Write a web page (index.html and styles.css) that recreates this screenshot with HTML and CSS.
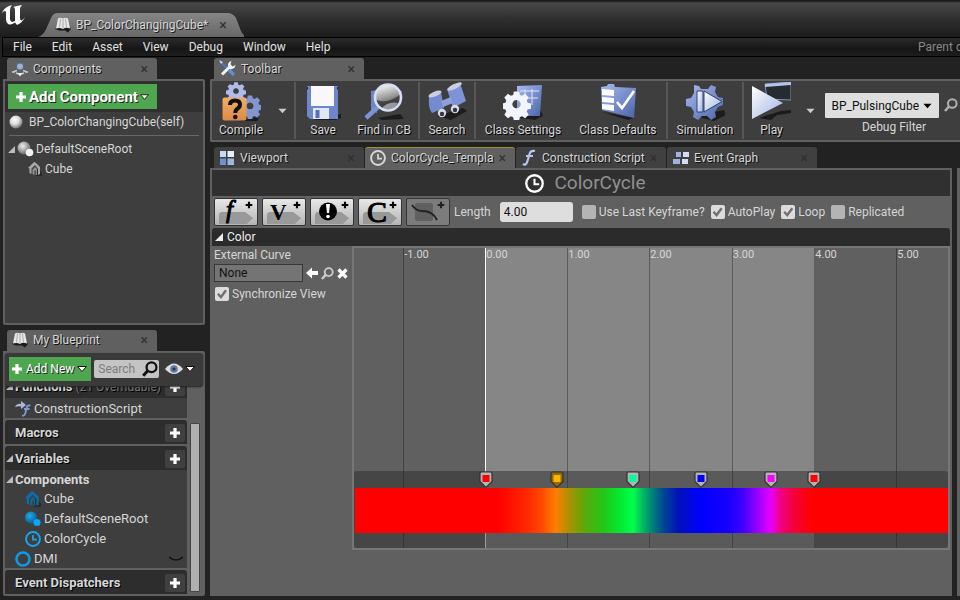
FILE: index.html
```html
<!DOCTYPE html>
<html lang="en">
<head>
<meta charset="utf-8">
<title>BP_ColorChangingCube</title>
<link rel="stylesheet" href="styles.css">
</head>
<body>
<svg class="defs" width="0" height="0" aria-hidden="true">
  <defs>
    <linearGradient id="blue" x1="0" y1="0" x2="1" y2="1"><stop offset="0" stop-color="#a9bcf0"/><stop offset="1" stop-color="#4a63a8"/></linearGradient>
    <linearGradient id="ice" x1="0" y1="0" x2="1" y2="1"><stop offset="0" stop-color="#ffffff"/><stop offset="1" stop-color="#9fb2e2"/></linearGradient>
    <linearGradient id="orange" x1="0" y1="0" x2="0" y2="1"><stop offset="0" stop-color="#f0ad6c"/><stop offset="1" stop-color="#dd8a42"/></linearGradient>
    <linearGradient id="lens" x1=".2" y1="0" x2=".5" y2="1"><stop offset="0" stop-color="#fff"/><stop offset=".6" stop-color="#8a8a8a"/><stop offset="1" stop-color="#444"/></linearGradient>
    <radialGradient id="ball" cx=".4" cy=".35" r=".65"><stop offset="0" stop-color="#fff"/><stop offset=".5" stop-color="#ddd"/><stop offset="1" stop-color="#777"/></radialGradient>
    <radialGradient id="greyball" cx=".4" cy=".35" r=".65"><stop offset="0" stop-color="#eee"/><stop offset="1" stop-color="#6a6a6a"/></radialGradient>
    <radialGradient id="blueball" cx=".4" cy=".35" r=".65"><stop offset="0" stop-color="#22a8ec"/><stop offset="1" stop-color="#04649c"/></radialGradient>
    <symbol id="gear" viewBox="-12 -12 24 24">
      <path fill-rule="evenodd" d="M-2.4-11.5h4.8l.7 3.2 2 .8 2.8-1.800 3.300 3.300-1.800 2.800.8 2 3.200.7v4.800l-3.200.7-.8 2 1.800 2.800-3.300 3.300-2.800-1.800-2 .8-.7 3.200h-4.800l-.7-3.200-2-.8-2.800 1.800-3.300-3.300 1.800-2.800-.8-2-3.200-.7v-4.800l3.200-.7.8-2-1.800-2.800 3.300-3.300 2.800 1.800 2-.8zM0-3.600a3.800 3.800 0 1 0 .01 0z" transform="scale(.9) translate(0 -1.400)"/>
    </symbol>
    <symbol id="book" viewBox="0 0 16 16">
      <path d="M0 12l2-2h12l2 2-3 3.500-3-2H4z" fill="#1b1b1b"/>
      <path d="M3 1.500q2.500-1.500 5 0 2.500-1.500 5 0l2 10q-4-1.500-7 .5-3-1.500-7-.5z" fill="#e8e8e8"/>
      <path d="M8 2v9.500M5.500 1.500l-1 9M10.500 1.500l1 9" stroke="#aaa" fill="none"/>
    </symbol>
    <symbol id="house" viewBox="0 0 14 14">
      <path d="M9 6l5 5v3H8z" fill="#111" opacity=".5"/>
      <path d="M0 6l6-6 2 1 4 4v7l-2 1V7L7 3 3.500 6.500V12L1.500 11V6.500z" fill="currentColor"/>
      <path d="M4.500 7.500L7 5l2 2v6H7.800V8.500H6.500V13l-2-1z" fill="currentColor" opacity=".8"/>
    </symbol>
    <symbol id="clock" viewBox="0 0 18 18"><circle cx="9" cy="9" r="7.800" fill="none" stroke="currentColor" stroke-width="2.200"/><path d="M9 4.500V9.700h4.500" fill="none" stroke="currentColor" stroke-width="2"/></symbol>
    <symbol id="plus" viewBox="0 0 12 12"><path d="M4.400 1h3.200v3.400H11v3.200H7.600V11H4.400V7.600H1V4.400h3.400z" fill="currentColor"/></symbol>
    <symbol id="down" viewBox="0 0 10 6"><path d="M.5.500h9L5 5.500z" fill="currentColor"/></symbol>
    <symbol id="open" viewBox="0 0 8 8"><path d="M8 0v8H0z" fill="currentColor"/></symbol>
    <symbol id="glass" viewBox="0 0 14 14"><circle cx="8.300" cy="5.500" r="4.300" fill="none" stroke="currentColor" stroke-width="2"/><path d="M5 8.500L1 13" stroke="currentColor" stroke-width="2.600"/></symbol>
    <symbol id="pin" viewBox="0 0 14 18"><path d="M2.500 1h9q1.500 0 1.500 1.500v8L7 16.500 1 10.500v-8Q1 1 2.500 1z" fill="var(--rim)" stroke="var(--edge)" stroke-width="1.200"/><path d="M3.500 4h7v7h-7z" fill="currentColor"/></symbol>
    <symbol id="tag" viewBox="0 0 34 12"><path d="M2 0h24l8 6-6 6H0V2z" fill="#999"/></symbol>
  </defs>
</svg>

<header class="titlebar">
  <svg class="logo" viewBox="0 0 24 21" aria-hidden="true"><path d="M0 8Q2 2 10 0 8 2 8 5v9q0 2 2 3l3-1V5q0-3-2-3 3-1 9-2-2 2-2 4v9q0 2 1.500 2.500Q21 15 23 12q-2 5-8 8l-2-2.500Q10 20 7 19.500 4 18 4 14V7Q3 4.500 0 8z" fill="#fff"/></svg>
  <div class="doc-tab">
    <svg width="16" height="16" aria-hidden="true"><use href="#book"/></svg>
    <span>BP_ColorChangingCube*</span>
    <button class="close" aria-label="Close document">×</button>
  </div>
</header>

<nav class="menubar">
  <button>File</button><button>Edit</button><button>Asset</button><button>View</button><button>Debug</button><button>Window</button><button>Help</button>
  <span class="parent">Parent class</span>
</nav>

<main class="workspace">
  <aside class="left">
    <section class="dock">
      <div class="tab active">
        <svg width="16" height="16" viewBox="0 0 16 16" aria-hidden="true"><path d="M4 2l8-1v8H4z" fill="#4f6a8d"/><circle cx="8" cy="5.500" r="3" fill="#9fb0c8"/><path d="M1 11l4-1.500M15 11l-4-1.500M0 11h3M13 11h3M4 12q4 2 8 0" stroke="#c3cad4" stroke-width="1.400" fill="none"/><path d="M5.500 12h5L8 15.500z" fill="#eee"/></svg>
        <h2>Components</h2><button class="close" aria-label="Close Components">×</button>
      </div>
      <div class="panel components">
        <div class="add-bar">
          <button class="green big"><svg width="12" height="12" aria-hidden="true"><use href="#plus"/></svg>Add Component<svg class="outlined" width="9" height="6" aria-hidden="true"><use href="#down"/></svg></button>
        </div>
        <div class="self"><svg width="14" height="14" viewBox="0 0 14 14" aria-hidden="true"><circle cx="7" cy="7" r="6.500" fill="url(#ball)"/></svg>BP_ColorChangingCube(self)</div>
        <ul class="tree">
          <li><svg class="arrow" width="7" height="7" aria-hidden="true"><use href="#open"/></svg><svg width="17" height="16" viewBox="0 0 17 16" aria-hidden="true"><circle cx="7" cy="7" r="6.500" fill="url(#greyball)"/><circle cx="12.500" cy="11.500" r="3.800" fill="#f2f2f2"/></svg>DefaultSceneRoot</li>
          <li class="child grey"><svg width="14" height="14" aria-hidden="true"><use href="#house"/></svg>Cube</li>
        </ul>
      </div>
    </section>

    <section class="dock">
      <div class="tab active">
        <svg width="16" height="16" aria-hidden="true"><use href="#book"/></svg>
        <h2>My Blueprint</h2><button class="close" aria-label="Close My Blueprint">×</button>
      </div>
      <div class="panel blueprint">
        <div class="bp-bar">
          <button class="green"><svg width="12" height="12" aria-hidden="true"><use href="#plus"/></svg>Add New<svg class="outlined" width="10" height="6" aria-hidden="true"><use href="#down"/></svg></button>
          <div class="search"><input type="text" placeholder="Search" aria-label="Search blueprint"><svg width="16" height="16" aria-hidden="true"><use href="#glass"/></svg></div>
          <button class="eye" aria-label="View options"><svg width="18" height="12" viewBox="0 0 18 12" aria-hidden="true"><path d="M0 6q9-11 18 0-9 10-18 0z" fill="#ddd"/><circle cx="9" cy="6" r="3.800" fill="#6079a8"/><circle cx="9" cy="6" r="1.600" fill="#26344f"/></svg><svg class="outlined" width="10" height="6" aria-hidden="true"><use href="#down"/></svg></button>
        </div>
        <div class="bp-body">
          <div class="bp-list">
            <div class="group"><svg class="arrow" width="7" height="7" aria-hidden="true"><use href="#open"/></svg><h3>Functions</h3><span class="dim">(21 Overridable)</span><button class="add" aria-label="Add function"><svg width="12" height="12" aria-hidden="true"><use href="#plus"/></svg></button></div>
            <ul class="rows spaced"><li><svg class="fn" width="16" height="16" viewBox="0 0 16 16" aria-hidden="true"><path d="M0 6q2-4 6-3V0l5 4-5 4V5.500Q3 5 0 6z" fill="#aab8da"/><path d="M7 14.500q2.500 1 3.500-3l1-4.500q.5-3 4-2.500M9 8h5.500" stroke="#7f98d8" stroke-width="1.800" fill="none"/></svg>ConstructionScript</li></ul>
            <div class="group spaced"><h3>Macros</h3><button class="add" aria-label="Add macro"><svg width="12" height="12" aria-hidden="true"><use href="#plus"/></svg></button></div>
            <div class="group"><svg class="arrow" width="7" height="7" aria-hidden="true"><use href="#open"/></svg><h3>Variables</h3><button class="add" aria-label="Add variable"><svg width="12" height="12" aria-hidden="true"><use href="#plus"/></svg></button></div>
            <ul class="rows spaced">
              <li class="sub"><svg class="arrow" width="7" height="7" aria-hidden="true"><use href="#open"/></svg><h4>Components</h4></li>
              <li class="item"><svg class="dark-blue" width="16" height="16" aria-hidden="true"><use href="#house"/></svg>Cube</li>
              <li class="item"><svg width="16" height="16" viewBox="0 0 16 16" aria-hidden="true"><circle cx="6" cy="6.500" r="6" fill="url(#blueball)"/><circle cx="12" cy="11.500" r="3.600" fill="#10a4f4"/></svg>DefaultSceneRoot</li>
              <li class="item"><svg class="sky" width="16" height="16" aria-hidden="true"><use href="#clock"/></svg>ColorCycle</li>
              <li class="var"><svg width="16" height="16" viewBox="0 0 16 16" aria-hidden="true"><circle cx="8" cy="8" r="6.500" fill="none" stroke="#0c9ae8" stroke-width="2.600"/></svg>DMI<button class="lid" aria-label="Toggle DMI visibility"><svg width="14" height="6" viewBox="0 0 14 6" aria-hidden="true"><path d="M0 1q7 6 14 0" fill="none" stroke="#111" stroke-width="1.600"/></svg></button></li>
            </ul>
            <div class="group"><h3>Event Dispatchers</h3><button class="add" aria-label="Add event dispatcher"><svg width="12" height="12" aria-hidden="true"><use href="#plus"/></svg></button></div>
          </div>
          <div class="scroll"><span class="thumb"></span></div>
        </div>
      </div>
    </section>
  </aside>

  <div class="right">
    <section class="toolbar-dock">
      <div class="tab active">
        <svg width="17" height="17" viewBox="0 0 17 17" aria-hidden="true"><path d="M1.500 2L11 11" stroke="#4976c8" stroke-width="2"/><path d="M10 10l5 5" stroke="#5b8de0" stroke-width="3.400"/><path d="M3 14.500L11 6.500" stroke="#f2f2f2" stroke-width="3"/><path d="M12.500 1Q8.500 2 9 6t4 3q3-.5 3.500-4l-3 1.500L11.500 4z" fill="#f2f2f2"/><path d="M0 0l4 2-2 2z" fill="#cfd8ea"/></svg>
        <h2>Toolbar</h2><button class="close" aria-label="Close Toolbar">×</button>
      </div>
      <div class="toolbar">
        <button class="tool"><svg width="40" height="40" viewBox="0 0 40 40" aria-hidden="true"><path d="M22 34l16 2-2 3H20z" fill="#1c1c1c"/><use href="#gear" x="5" y="0" width="20" height="20" fill="#aebcea"/><use href="#gear" x="17" y="13" width="24" height="24" fill="#8495cf"/><rect x="1.500" y="15.500" width="24" height="23" rx="2" fill="url(#orange)"/><path d="M9 23q0-4.500 5-4.500t5 4q0 2.500-2.500 4.200Q14.300 28 14.300 31" fill="none" stroke="#111" stroke-width="4"/><circle cx="14.300" cy="35" r="2.300" fill="#111"/></svg>Compile</button>
        <button class="caret" aria-label="Compile options"><svg width="9" height="6" aria-hidden="true"><use href="#down"/></svg></button>
        <i class="sep"></i>
        <button class="tool"><svg width="40" height="40" viewBox="0 0 40 40" aria-hidden="true"><path d="M10 38l28-6v4l-6 2z" fill="#1c1c1c"/><path d="M4 4h31v33H7l-3-3z" fill="#6f86cc"/><path d="M8 4h23v20H8z" fill="#f8f8fb"/><path d="M10 26h16v11H10z" fill="#e2e6f2"/><path d="M12.500 28h4v8h-4z" fill="#5570bd"/><path d="M4.500 5v2.500M34.500 5v2.500" stroke="#223"/></svg>Save</button>
        <button class="tool"><svg width="40" height="40" viewBox="0 0 40 40" aria-hidden="true"><path d="M14 36l22-4 4 5-22 1z" fill="#1c1c1c"/><path d="M7 9l6-1v23l-6-3zM32 10l6-1-1 10-4 5z" fill="#7185bd"/><path d="M14 25L2 36" stroke="#7c93d6" stroke-width="4.500"/><circle cx="24" cy="15.500" r="13" fill="url(#lens)"/><path d="M11.500 18q14 4 25-6 1 16-13 16.500-9-1-12-10.500z" fill="#2c2c2c" opacity=".7"/><path d="M17 27q7-8 17-6-5 9-17 6z" fill="#999"/><circle cx="24" cy="15.500" r="13" fill="none" stroke="#d6dff6" stroke-width="2.600"/></svg>Find in CB</button>
        <i class="sep"></i>
        <button class="tool"><svg width="40" height="40" viewBox="0 0 40 40" aria-hidden="true"><path d="M10 34l26-8 4 3-16 9z" fill="#1c1c1c"/><path d="M2 14l12-4 3 16-12 5q-4-4-3-17z" fill="#758bce"/><path d="M20 7l13-6 6 18-13 7z" fill="#7d93d6"/><path d="M14 19l10-4 2 6-10 4z" fill="#8da0d8"/><ellipse cx="8" cy="12" rx="7" ry="2.500" transform="rotate(-22 8 12)" fill="#c9cfdf"/><ellipse cx="27.500" cy="4.500" rx="8" ry="2.500" transform="rotate(-26 27.500 4.500)" fill="#c9cfdf"/><circle cx="15" cy="31" r="4.200" fill="#d7dbe6"/><circle cx="15" cy="32" r="2.200" fill="#334"/><circle cx="28" cy="27" r="4.200" fill="#d7dbe6"/><circle cx="28" cy="28" r="2.200" fill="#334"/></svg>Search</button>
        <i class="sep"></i>
        <button class="tool roomy"><svg width="40" height="40" viewBox="0 0 40 40" aria-hidden="true"><path d="M12 35l26-6 2 5-8 4z" fill="#1c1c1c"/><path d="M14 4l25-1-2 31H14z" fill="url(#blue)"/><path d="M17 9h19M16 16h19M22 7v14M29 7v16" stroke="#dfe7fb" fill="none"/><use href="#gear" x="-1" y="9" width="29" height="29" fill="#f2f5fb"/></svg>Class Settings</button>
        <button class="tool roomy"><svg width="40" height="40" viewBox="0 0 40 40" aria-hidden="true"><path d="M4 30l26 8 6-2z" fill="#1c1c1c"/><path d="M3 5l6-1 1-2h6l1 3 21 1-2 30L4 28z" fill="url(#blue)"/><path d="M4 7l12 1v6L4 13zM4 15l12 1v5L4 20zM4 22l12 1v6L4 27z" fill="#fff"/><path d="M19 20l5 6L36 9" fill="none" stroke="#fff" stroke-width="2.600"/></svg>Class Defaults</button>
        <i class="sep"></i>
        <button class="tool roomy"><svg width="40" height="40" viewBox="0 0 40 40" aria-hidden="true"><path d="M10 34l29-6 2 5-12 6z" fill="#1c1c1c"/><path d="M9 3l5 1 2 3h7l3-4 5 2-1 5 3 5 5 1v7l-5 2-3 5 1 5-5 3-4-4h-5l-4 4-5-3 1-5-3-5-5-1v-7l5-1 3-5z" fill="url(#blue)"/><path d="M12 9h6v21h-6z" fill="url(#ice)" stroke="#314270"/><path d="M19 9l18 10.500L19 30z" fill="url(#ice)" stroke="#314270"/></svg>Simulation</button>
        <i class="sep"></i>
        <button class="tool"><svg width="40" height="40" viewBox="0 0 40 40" aria-hidden="true"><path d="M8 36l22-7 10-1v3l-14 2-6 5z" fill="#1a1a1a"/><path d="M14 2l26-2v18l-24-1z" fill="#262a31" stroke="#8296bd"/><path d="M14 2l26-2v3L14 5z" fill="#b4c5ec"/><path d="M1 4l31 17L1 37z" fill="url(#ice)"/></svg>Play</button>
        <button class="caret" aria-label="Play options"><svg width="9" height="6" aria-hidden="true"><use href="#down"/></svg></button>
        <div class="debug">
          <div class="select"><select id="debug"><option>BP_PulsingCube</option></select><svg width="9" height="6" aria-hidden="true"><use href="#down"/></svg></div>
          <label for="debug">Debug Filter</label>
        </div>
        <button class="find" aria-label="Find debug object"><svg width="14" height="14" aria-hidden="true"><use href="#glass"/></svg></button>
      </div>
    </section>

    <div class="lower">
      <section class="editor-dock">
        <div class="tabs">
          <div class="tab"><svg width="16" height="16" viewBox="0 0 16 16" aria-hidden="true"><path d="M1 1h6v6H1z" fill="#c8dbf5"/><path d="M8.500 1H15v6H8.500z" fill="#e8f0fb"/><path d="M1 8.500h6V15H1z" fill="#6c93cf"/><path d="M8.500 8.500H15V15H8.500z" fill="#9bb8e4"/></svg><h2>Viewport</h2><button class="close" aria-label="Close Viewport">×</button></div>
          <div class="tab active current"><svg width="16" height="16" aria-hidden="true"><use href="#clock"/></svg><h2>ColorCycle_Templa</h2><button class="close" aria-label="Close ColorCycle">×</button></div>
          <div class="tab"><svg width="14" height="17" viewBox="0 0 14 17" aria-hidden="true"><path d="M1 15q3 2 4.500-3l2-7Q8.500 1 13 2M4 7h7" stroke="#b4c6f2" stroke-width="2.200" fill="none"/></svg><h2>Construction Script</h2><button class="close" aria-label="Close Construction Script">×</button></div>
          <div class="tab"><svg width="17" height="14" viewBox="0 0 17 14" aria-hidden="true"><path d="M4 1h5v5H4zM1 8h7v5H1z" fill="#9fb4e2"/><path d="M11 1h6v5h-6zM10 8h6v5h-6z" fill="#d3ddf4"/></svg><h2>Event Graph</h2><button class="close" aria-label="Close Event Graph">×</button></div>
        </div>
        <div class="editor">
          <header class="heading"><svg width="19" height="19" aria-hidden="true"><use href="#clock"/></svg><h1>ColorCycle</h1></header>
          <form class="options">
            <button type="button" class="track-btn" aria-label="Add float track"><svg viewBox="0 0 42 26" aria-hidden="true"><use href="#tag" x="4" y="13" width="34" height="12"/><text x="11" y="19" class="glyph italic">f</text><use href="#plus" x="30" y="2" width="8" height="8"/></svg></button>
            <button type="button" class="track-btn" aria-label="Add vector track"><svg viewBox="0 0 42 26" aria-hidden="true"><use href="#tag" x="4" y="13" width="34" height="12"/><text x="7" y="21" class="glyph">V</text><use href="#plus" x="30" y="2" width="8" height="8"/></svg></button>
            <button type="button" class="track-btn" aria-label="Add event track"><svg viewBox="0 0 42 26" aria-hidden="true"><use href="#tag" x="4" y="13" width="34" height="12"/><circle cx="17" cy="12.500" r="9"/><path d="M15 5h4l-1 9h-2z" fill="#fff"/><circle cx="17" cy="17.500" r="1.800" fill="#fff"/><use href="#plus" x="30" y="2" width="8" height="8"/></svg></button>
            <button type="button" class="track-btn" aria-label="Add color track"><svg viewBox="0 0 42 26" aria-hidden="true"><use href="#tag" x="4" y="13" width="34" height="12"/><text x="8" y="23" class="glyph large">C</text><use href="#plus" x="30" y="2" width="8" height="8"/></svg></button>
            <button type="button" class="track-btn off" disabled aria-label="Add curve asset"><svg viewBox="0 0 42 26" aria-hidden="true"><rect x="8" y="4" width="18" height="18" rx="2" fill="#606060"/><path d="M5 6q4 6 10 6 11 0 15 9" fill="none" stroke="#222" stroke-width="2"/><use href="#plus" x="30" y="2" width="8" height="8"/></svg></button>
            <label class="length" for="length">Length</label><input id="length" class="number" type="text" value="4.00">
            <label class="check"><input type="checkbox">Use Last Keyframe?</label>
            <label class="check"><input type="checkbox" checked>AutoPlay</label>
            <label class="check"><input type="checkbox" checked>Loop</label>
            <label class="check"><input type="checkbox">Replicated</label>
          </form>
          <div class="track-title"><svg width="8" height="8" aria-hidden="true"><use href="#open"/></svg><h2>Color</h2></div>
          <div class="track">
            <div class="props">
              <label for="curve">External Curve</label>
              <div class="curve">
                <input id="curve" type="text" value="None">
                <button aria-label="Use selected curve"><svg width="12" height="12" viewBox="0 0 12 12" aria-hidden="true"><path d="M0 6l6-5.500V4h6v4H6v3.500z" fill="#fff"/></svg></button>
                <button class="pale" aria-label="Browse to curve"><svg width="13" height="13" aria-hidden="true"><use href="#glass"/></svg></button>
                <button aria-label="Clear curve"><svg width="11" height="11" viewBox="0 0 11 11" aria-hidden="true"><path d="M1.500 1.500l8 8M9.500 1.500l-8 8" stroke="#fff" stroke-width="3.200"/></svg></button>
              </div>
              <label class="check"><input type="checkbox" checked>Synchronize View</label>
            </div>
            <div class="timeline">
              <div class="range"></div>
              <span class="tick" style="left:8.300%">-1.00</span>
              <span class="tick zero" style="left:22.100%">0.00</span>
              <span class="tick" style="left:35.900%">1.00</span>
              <span class="tick" style="left:49.700%">2.00</span>
              <span class="tick" style="left:63.600%">3.00</span>
              <span class="tick bare" style="left:77.500%">4.00</span>
              <span class="tick" style="left:91.300%">5.00</span>
              <div class="lane"></div>
              <div class="band"></div>
              <svg class="key red" style="left:22.300%" aria-hidden="true"><use href="#pin"/></svg>
              <svg class="key amber" style="left:34.100%" aria-hidden="true"><use href="#pin"/></svg>
              <svg class="key mint" style="left:47%" aria-hidden="true"><use href="#pin"/></svg>
              <svg class="key blue" style="left:58.400%" aria-hidden="true"><use href="#pin"/></svg>
              <svg class="key pink" style="left:70.200%" aria-hidden="true"><use href="#pin"/></svg>
              <svg class="key red" style="left:77.500%" aria-hidden="true"><use href="#pin"/></svg>
            </div>
          </div>
        </div>
      </section>
      <div class="next-panel"></div>
    </div>
  </div>
</main>
</body>
</html>
```
FILE: styles.css
```css
* { box-sizing: border-box; margin: 0; padding: 0; }
body {
  height: 100vh;
  display: flex;
  flex-direction: column;
  overflow: hidden;
  background: #222;
  color: #d6d6d6;
  font: 12px/16px Roboto, sans-serif;
}
svg { flex: none; display: block; }
.defs { position: absolute; }
button, input, select { font: inherit; color: inherit; border: 0; background: none; }
button { display: flex; align-items: center; white-space: nowrap; }
h1, h2, h3, h4 { font: inherit; white-space: nowrap; }
ul { list-style: none; }

.titlebar {
  height: 37px;
  flex: none;
  display: flex;
  align-items: flex-end;
  background: linear-gradient(#1b1b1b 1px, #484848 3px, #303030 18px, #1c1c1c);
}
.logo { width: 24px; height: 21px; margin-left: 2px; align-self: flex-start; margin-top: 5px; }
.doc-tab {
  height: 24px;
  margin-left: 12px;
  padding: 0 17px;
  display: flex;
  align-items: center;
  gap: 5px;
  background: linear-gradient(#858585, #686868);
  clip-path: path("M0 24Q6 22 9 14L13 5Q15 0 20 0H189Q195 0 198 5L203 18Q205 23 210 24Z");
  text-shadow: 1px 1px 0 #222;
}
.doc-tab .close { margin-left: 6px; }
.close { font-size: 14px; color: #303030; text-shadow: none; }
.menubar {
  height: 20px;
  flex: none;
  display: flex;
  align-items: center;
  margin-left: 2px;
  border: 1px solid #000;
  border-right: 0;
  background: linear-gradient(#2b2b2b, #161616 60%, #1d1d1d);
  color: #e0e0e0;
}
.menubar button { padding: 0 10px; }
.parent { margin-left: auto; margin-right: -24px; color: #888; white-space: nowrap; }

.workspace {
  flex: 1;
  min-height: 0;
  display: grid;
  grid-template-columns: 202px minmax(0, 1fr);
  gap: 5px;
  padding: 1px 0 4px 3px;
}
.left { display: flex; flex-direction: column; gap: 5px; min-height: 0; }
.dock { flex: 1; min-height: 0; display: flex; flex-direction: column; }
.tab {
  flex: none;
  width: 150px;
  height: 21px;
  margin-left: 4px;
  padding: 0 9px 0 5px;
  display: flex;
  align-items: center;
  gap: 5px;
  border-radius: 3px 3px 0 0;
  background: #404040;
  text-shadow: 1px 1px 0 #111;
}
.tab .close { margin-left: auto; }
.tab svg { min-width: 16px; }
.tab.active { background: #606060; }
.tab.current { border-top: 1px solid #a09238; }
.panel {
  flex: 1;
  min-height: 0;
  border: 2px solid #606060;
  border-radius: 0 2px 2px 2px;
  background: #3e3e3e;
}
.add-bar { padding: 3px; background: #303030; }
.green { background: #4ea64e; color: #fff; text-shadow: 1px 1px 0 #222; }
.green.big { height: 25px; padding: 0 8px 0 7px; gap: 2px; font-size: 15px; font-weight: 700; }
.outlined { overflow: visible; stroke: #111; stroke-width: 1px; color: #fff; }
.self { height: 24px; margin: 0 4px; padding-bottom: 4px; display: flex; align-items: center; gap: 6px; border-bottom: 1px solid #686868; }
.tree { padding: 3px; }
.tree li { height: 20px; display: flex; align-items: center; gap: 2px; }
.tree .child { padding-left: 20px; gap: 3px; }
.grey svg { color: #a8a8a8; }
.arrow { color: #bbb; }

.blueprint { display: flex; flex-direction: column; background: #606060; }
.bp-bar {
  height: 33px;
  flex: none;
  display: flex;
  align-items: center;
  padding: 0 4px;
  background: #3a3a3a;
  box-shadow: 0 1px 2px #222;
  border-radius: 3px;
  z-index: 1;
}
.bp-bar .green { height: 24px; padding: 0 4px 0 2px; gap: 3px; }
.search { display: flex; align-items: center; width: 65px; height: 18px; margin-left: 3px; padding: 0 1px 0 4px; border-radius: 2px; background: #c4c4c4; color: #111; }
.search input { flex: 1; min-width: 0; }
.search input::placeholder { color: #7d7d7d; }
.eye { gap: 2px; margin-left: 6px; }
.bp-body { flex: 1; min-height: 0; display: flex; font-size: 13px; line-height: 18px; }
.bp-list { flex: 1; min-width: 0; display: flex; flex-direction: column; justify-content: flex-end; overflow: hidden; }
.bp-list > * { flex: none; }
.group { height: 24px; padding: 1px 2px 0 1px; display: flex; align-items: center; gap: 2px; background: #2d2d2d; border-radius: 3px 3px 0 0; text-shadow: 1px 1px 0 #000; }
.group h3, .rows h4 { font-weight: 700; font-size: 13px; }
.group > h3:first-child { padding-left: 9px; }
.dim { color: #777; padding-left: 1px; font-size: 12px; white-space: nowrap; }
.add { margin-left: auto; width: 20px; height: 18px; flex: none; justify-content: center; background: #404040; border-radius: 2px; color: #fff; }
.spaced { margin-bottom: 2px; }
.rows { background: #3e3e3e; }
.rows li { height: 20px; display: flex; align-items: center; gap: 3px; padding: 1px 0 0 10px; }
.rows .sub { height: 18px; padding-left: 1px; gap: 2px; }
.rows .item { padding-left: 20px; }
.dark-blue { color: #0b6ea6; }
.sky { color: #18a4f2; }
.lid { margin: 0 4px 0 auto; }
.scroll { flex: none; width: 16px; padding: 37px 3px 2px; display: flex; }
.thumb { flex: 1; border: 1px solid #444; border-radius: 1px; background: #b0b0b0; }

.right { display: flex; flex-direction: column; gap: 5px; min-width: 0; min-height: 0; }
.toolbar {
  height: 63px;
  display: flex;
  align-items: stretch;
  border: 2px solid #606060;
  border-right: 0;
  border-radius: 2px 0 0 2px;
  background: #3e3e3e;
}
.tool { flex: none; flex-direction: column; min-width: 52px; padding: 1px 7px 0; text-shadow: 1px 1px 0 #000; }
.tool.roomy { padding: 1px 9px 0; }
.caret { flex: none; width: 24px; justify-content: center; color: #ccc; }
.sep { flex: none; width: 2px; background: #575757; margin: 1px 0; }
.debug { flex: none; margin-top: 12px; margin-left: 3px; display: flex; flex-direction: column; align-items: center; }
.select { position: relative; width: 114px; }
.select select { appearance: none; width: 100%; height: 25px; padding-left: 6px; background: #dedede; color: #111; border-radius: 1px; }
.select svg { position: absolute; right: 7px; top: 10px; color: #000; }
.debug label { margin-top: 1px; padding-left: 23px; }
.find { align-self: flex-start; margin: 17px 0 0 5px; color: #b0b0b0; }

.lower { flex: 1; min-height: 0; display: grid; grid-template-columns: minmax(0, 1fr) 3px; gap: 5px; }
.editor-dock { display: flex; flex-direction: column; min-height: 0; }
.tabs { display: flex; gap: 1px; padding-left: 4px; }
.tabs .tab { margin-left: 0; }
.editor { flex: 1; min-height: 0; border: 2px solid #606060; background: #606060; display: flex; flex-direction: column; }
.next-panel { margin-top: 21px; background: #606060; }
.heading { height: 26px; display: flex; align-items: center; justify-content: center; gap: 11px; padding-left: 8px; background: #303030; color: #fff; }
.heading h1 { font-size: 19px; line-height: 24px; color: #909090; }
.options { height: 32px; display: flex; align-items: center; padding-left: 2px; white-space: nowrap; }
.track-btn { width: 44px; height: 28px; margin-right: 4px; border: 1px solid #333; border-radius: 2px; background: linear-gradient(#e8e8e8, #b4b4b4); color: #000; }
.track-btn svg { width: 42px; height: 26px; }
.track-btn.off { background: #7c7c7c; color: #222; }
.glyph { font: 700 23px "Liberation Serif", serif; }
.glyph.italic { font-style: italic; font-weight: 400; font-size: 25px; stroke: #000; stroke-width: 1px; }
.glyph.large { font-weight: 400; font-size: 30px; stroke: #000; stroke-width: 1px; }
.length { margin-right: 9px; }
.number { width: 73px; height: 20px; padding-left: 4px; border-radius: 3px; background: #dedede; color: #111; margin-right: 3px; }
.check { display: flex; align-items: center; gap: 3px; margin-left: 6px; }
.check input { appearance: none; width: 14px; height: 14px; border-radius: 2px; background: #b4b4b4; }
.check input:checked { background: #dcdcdc; }
.check input:checked::after {
  content: "";
  display: block;
  width: 10px;
  height: 10px;
  margin: 2px;
  background: #707070;
  clip-path: polygon(0 55%, 18% 40%, 38% 62%, 80% 5%, 100% 20%, 40% 100%);
}
.track-title { height: 18px; display: flex; align-items: center; gap: 4px; padding-left: 3px; background: #2b2b2b; border-radius: 3px 3px 0 0; color: #eee; }
.track { display: grid; grid-template-columns: 140px minmax(0, 1fr); height: 304px; }
.props { padding: 1px 0 0 2px; display: flex; flex-direction: column; }
.curve { display: flex; align-items: center; gap: 3px; margin: 1px 0 4px; }
.curve input { width: 89px; height: 18px; padding-left: 4px; background: #747474; border: 1px solid #383838; color: #111; }
.curve button { color: #ccc; }
.props .check { margin-left: 1px; }

.timeline { position: relative; border: 2px solid #767676; overflow: hidden; }
.range, .lane, .band, .tick, .key { position: absolute; }
.range { left: 22.1%; right: 22.5%; top: 0; bottom: 0; background: #868686; }
.tick { top: 0; bottom: 0; border-left: 1px solid rgba(0, 0, 0, .32); line-height: 14px; font-size: 11px; }
.tick.zero { border-color: #fff; }
.tick.bare { border-color: transparent; }
.lane { left: 0; right: 0; top: 223px; bottom: 0; border-radius: 3px; background: rgba(40, 40, 40, .46); }
.band {
  left: 1px;
  right: 0;
  top: 240px;
  height: 45px;
  background: linear-gradient(90deg, #f00 24%, #ff2800 29%, #ff4a00 31.500%, #ff7f00 33.900%, #b09000 36%, #5ea80a 38.600%, #20c818 42%, #00ee34 45%, #00ff4c 46.900%, #00a868 49%, #004c90 51.800%, #0012b8 54.500%, #0000ff 58.300%, #1600ff 63%, #4400ff 65.500%, #e600ff 70.100%, #f00080 71.800%, #f4003c 74%, #f00 77%);
}
.key { --rim: #b4b4b4; --edge: #333; width: 14px; height: 18px; margin-left: -7px; top: 223px; }
.red { color: #f00; }
.amber { color: #ffb400; --rim: #966a00; }
.mint { color: #00ff98; }
.blue { color: #00f; }
.pink { color: #f0f; }
```
